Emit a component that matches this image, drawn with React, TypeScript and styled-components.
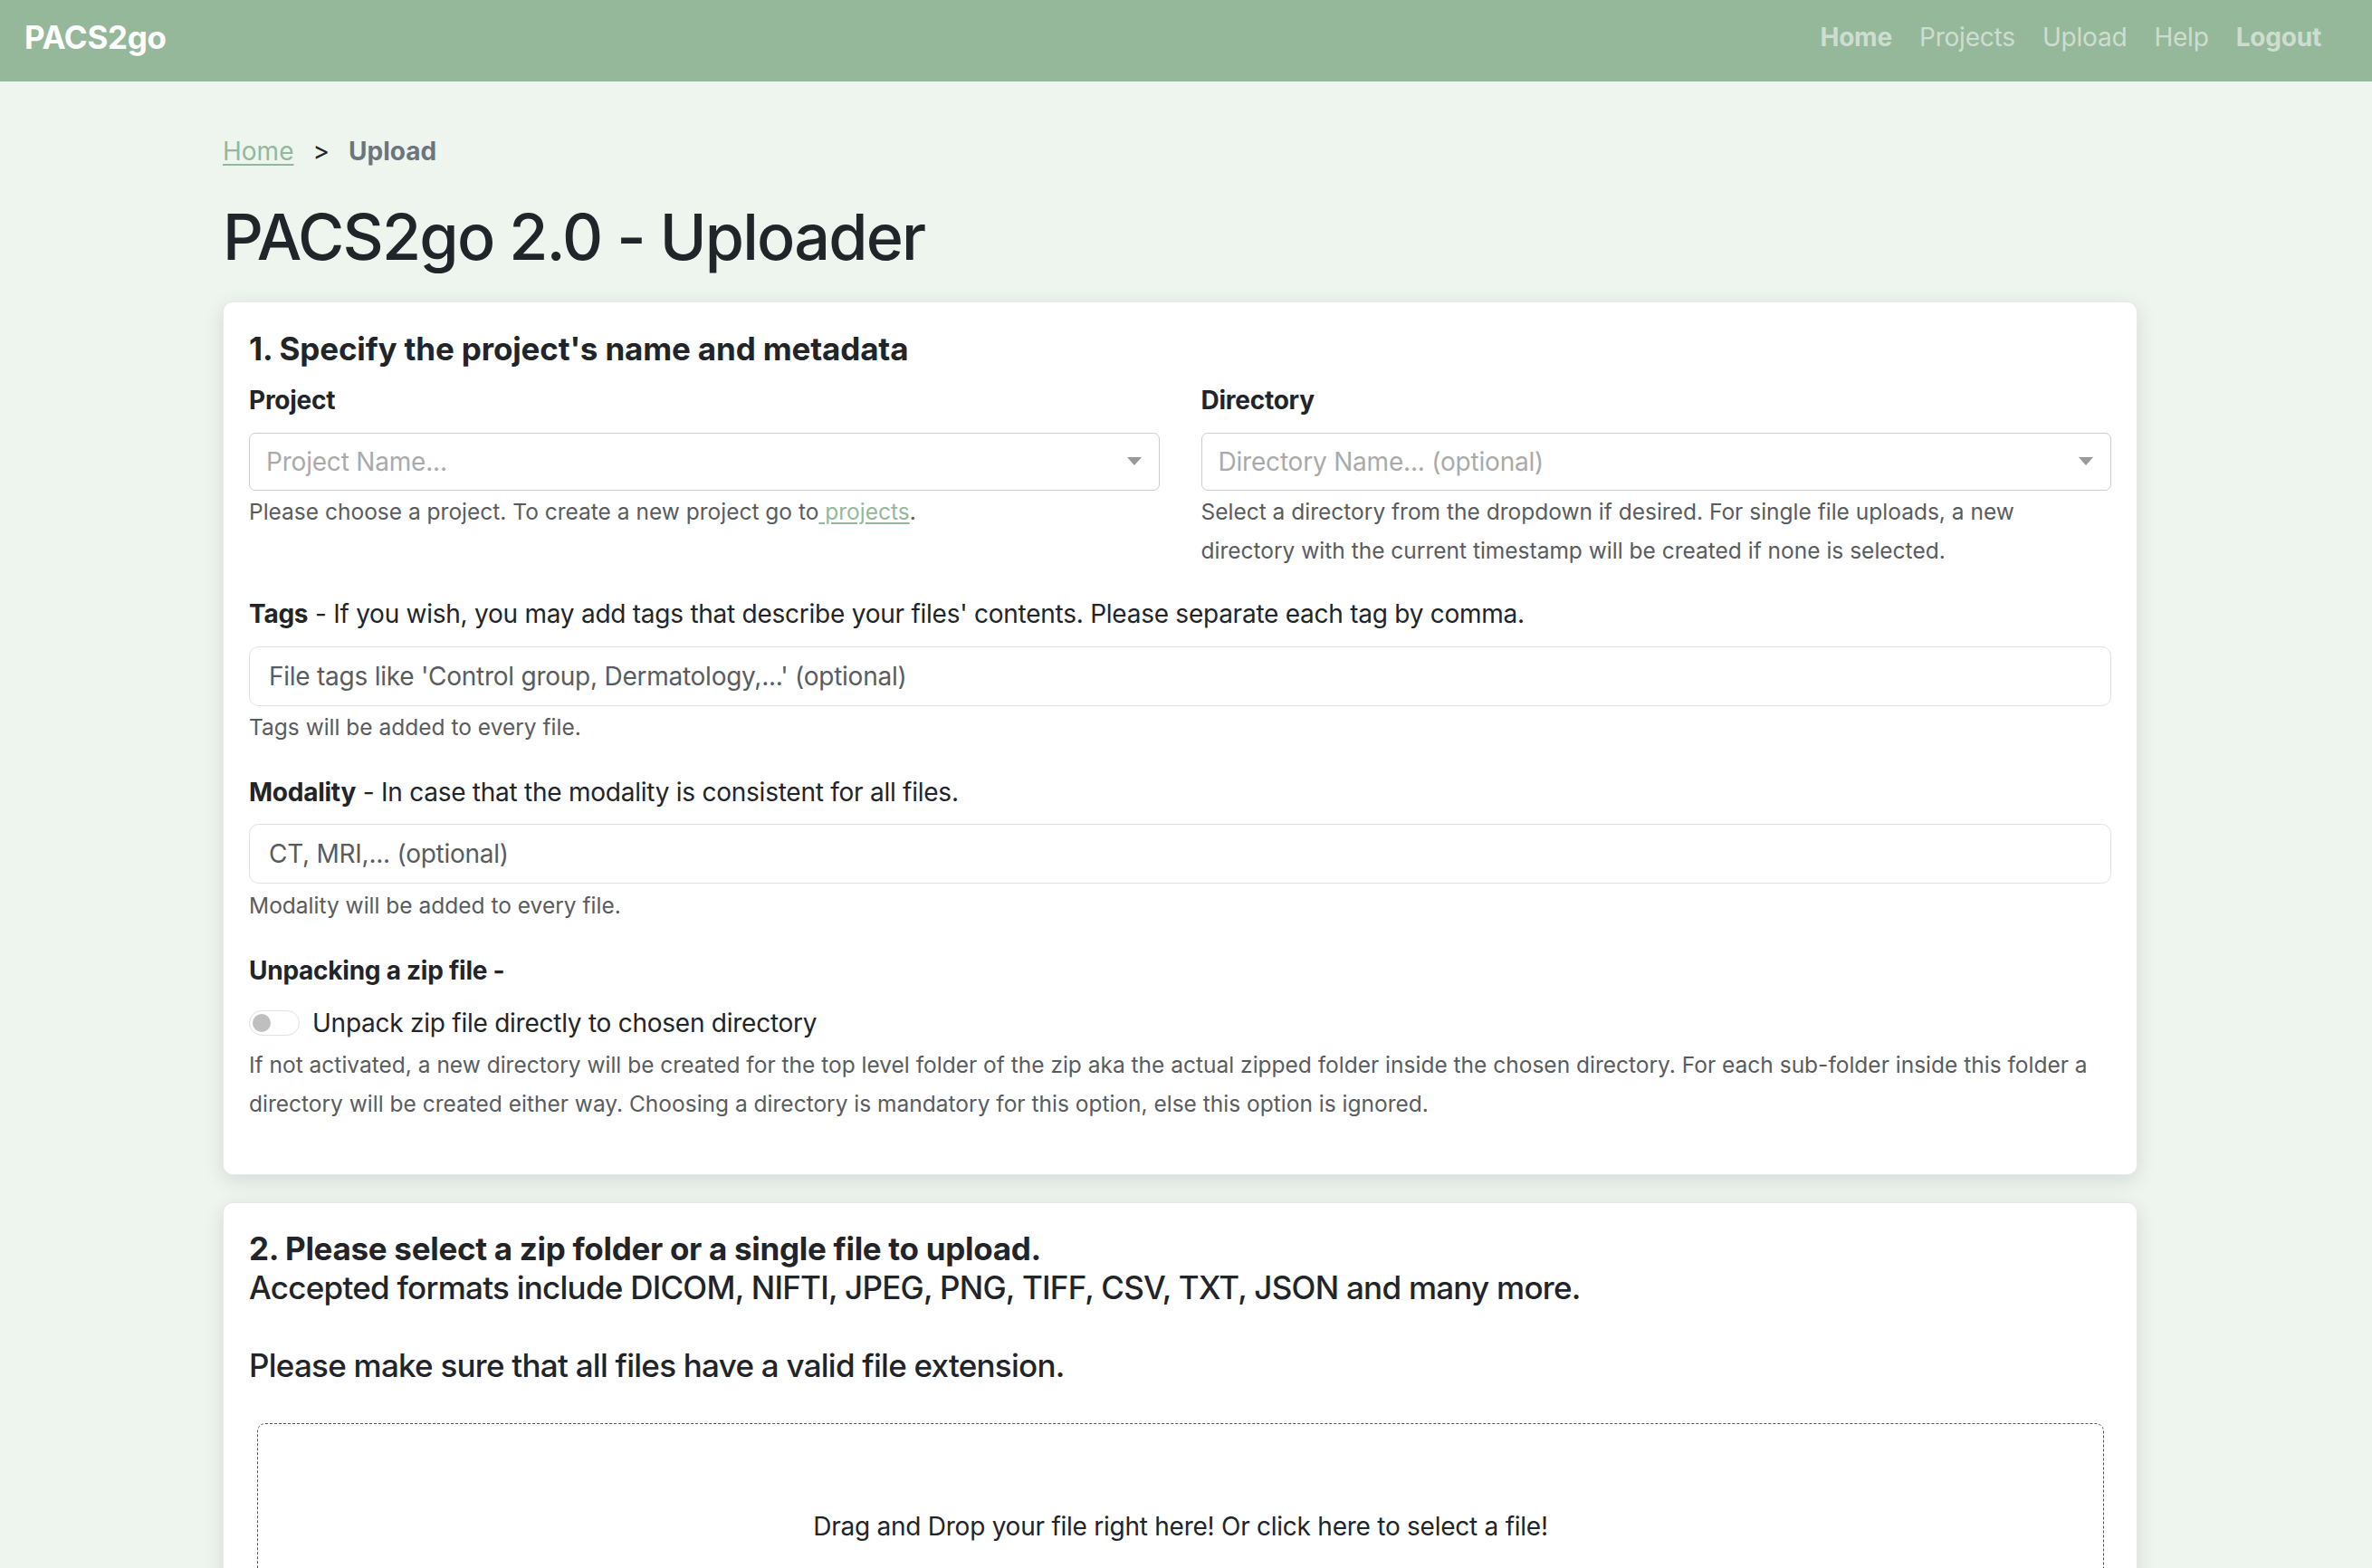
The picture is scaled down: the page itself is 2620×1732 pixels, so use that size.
import React from "react";
import styled, { createGlobalStyle } from "styled-components";

const GlobalStyle = createGlobalStyle`
  html, body {
    margin: 0;
    padding: 0;
  }
  body {
    background: #eef5ef;
    font-family: Inter, "Noto Sans", "Liberation Sans", sans-serif;
    color: #212529;
    font-size: 28px;
    line-height: 1.5;
  }
  * { box-sizing: border-box; }
`;

const NavBar = styled.nav`
  height: 90px;
  background: #95b89b;
  display: flex;
  align-items: center;
  justify-content: space-between;
  padding: 0 41px 8px 27px;
`;

const Brand = styled.a`
  color: #ffffff;
  font-size: 35px;
  font-weight: 700;
  text-decoration: none;
  letter-spacing: -0.3px;
`;

const NavList = styled.div`
  display: flex;
  align-items: center;
`;

const NavLink = styled.a<{ $bold?: boolean }>`
  color: rgba(255, 255, 255, 0.55);
  font-size: 28px;
  font-weight: ${(p) => (p.$bold ? 700 : 400)};
  padding: 0 15px;
  text-decoration: none;
  letter-spacing: -0.2px;
`;

const Main = styled.main`
  width: 2115px;
  margin-left: 246px;
  padding-top: 56px;
  padding-bottom: 40px;
`;

const Breadcrumb = styled.div`
  display: flex;
  align-items: baseline;
  font-size: 28px;
  line-height: 42px;
`;

const CrumbLink = styled.a`
  color: #94b89b;
  text-decoration: underline;
  text-underline-offset: 4px;
  text-decoration-thickness: 2px;
`;

const CrumbSep = styled.span`
  color: #212529;
  margin: 0 21px;
`;

const CrumbActive = styled.span`
  color: #6c757d;
  font-weight: 700;
`;

const Title = styled.h1`
  font-size: 70px;
  font-weight: 500;
  line-height: 84px;
  margin: 32px 0 29px 0;
  letter-spacing: -1.8px;
`;

const Card = styled.section<{ $gap?: number }>`
  background: #ffffff;
  border: 1px solid rgba(0, 0, 0, 0.09);
  border-radius: 11px;
  box-shadow: 0 6px 22px rgba(0, 0, 0, 0.11);
  padding: 29.5px 28px 28px 28px;
  margin-bottom: ${(p) => p.$gap ?? 0}px;
  overflow: hidden;
`;

const CardTitle = styled.h5`
  font-size: 35px;
  font-weight: 700;
  line-height: 42px;
  margin: 0 0 15.5px 0;
  letter-spacing: -0.15px;
`;

const Row = styled.div`
  display: grid;
  grid-template-columns: 1fr 1fr;
  column-gap: 46px;
  margin-bottom: 27.5px;
`;

const Group = styled.div<{ $mb?: number }>`
  margin-bottom: ${(p) => p.$mb ?? 0}px;
`;

const Label = styled.div<{ $mb?: number }>`
  font-size: 28px;
  line-height: 42px;
  letter-spacing: -0.25px;
  margin-bottom: ${(p) => p.$mb ?? 14}px;
`;

const Strong = styled.span`
  font-weight: 700;
`;

const DropdownBox = styled.div`
  height: 64px;
  border: 1px solid #cccccc;
  border-radius: 7px;
  background: #ffffff;
  display: flex;
  align-items: center;
  padding: 0 19px 0 18px;
`;

const DropdownPlaceholder = styled.span`
  flex: 1;
  color: #aaaaaa;
  font-size: 28px;
  letter-spacing: -0.2px;
`;

const Caret = styled.span`
  width: 0;
  height: 0;
  border-style: solid;
  border-width: 9px 8.5px 0 8.5px;
  border-color: #999999 transparent transparent transparent;
`;

const HelpText = styled.div<{ $mt?: number }>`
  font-size: 24.5px;
  line-height: 43px;
  color: #595c5f;
  margin-top: ${(p) => p.$mt ?? 2}px;
`;

const HelpLink = styled.a`
  color: #94b89b;
  text-decoration: underline;
  text-underline-offset: 3px;
`;

const TextInput = styled.input`
  display: block;
  width: 100%;
  height: 66px;
  border: 1px solid #dee2e6;
  border-radius: 10.5px;
  padding: 0 21px;
  font-family: inherit;
  font-size: 28px;
  letter-spacing: -0.25px;
  color: #212529;
  background: #ffffff;
  outline: none;
  &::placeholder {
    color: #595c5f;
    opacity: 1;
  }
`;

const SwitchRow = styled.label`
  display: flex;
  align-items: center;
  gap: 14px;
  font-size: 28px;
  line-height: 42px;
  letter-spacing: -0.25px;
  margin-top: 15.5px;
`;

const SwitchTrack = styled.span`
  width: 56px;
  height: 28px;
  border: 1px solid #dee2e6;
  border-radius: 14px;
  background: #ffffff;
  display: flex;
  align-items: center;
  padding-left: 3px;
  flex-shrink: 0;
`;

const SwitchKnob = styled.span`
  width: 20px;
  height: 20px;
  border-radius: 50%;
  background: #bfbfbf;
`;

const Heading2 = styled.h5`
  font-size: 35px;
  font-weight: 500;
  line-height: 43px;
  margin: 0 0 14px 0;
  letter-spacing: -0.75px;
`;

const Bold = styled.span`
  font-weight: 700;
  letter-spacing: -0.3px;
`;

const DropZone = styled.div`
  margin: 42px 8px 0 9px;
  height: 226px;
  border: 1px dashed #555555;
  border-radius: 9px;
  display: flex;
  align-items: center;
  justify-content: center;
  font-size: 28px;
  letter-spacing: -0.25px;
  color: #212529;
  padding-top: 2px;
`;

export default function App() {
  return (
    <>
      <GlobalStyle />
      <NavBar>
        <Brand href="#">PACS2go</Brand>
        <NavList>
          <NavLink $bold href="#">Home</NavLink>
          <NavLink href="#">Projects</NavLink>
          <NavLink href="#">Upload</NavLink>
          <NavLink href="#">Help</NavLink>
          <NavLink $bold href="#">Logout</NavLink>
        </NavList>
      </NavBar>
      <Main>
        <Breadcrumb>
          <CrumbLink href="#">Home</CrumbLink>
          <CrumbSep>&gt;</CrumbSep>
          <CrumbActive>Upload</CrumbActive>
        </Breadcrumb>
        <Title>PACS2go 2.0 - Uploader</Title>

        <Card $gap={30}>
          <CardTitle>1. Specify the project's name and metadata</CardTitle>
          <Row>
            <div>
              <Label $mb={14.5}>
                <Strong>Project</Strong>
              </Label>
              <DropdownBox>
                <DropdownPlaceholder>Project Name...</DropdownPlaceholder>
                <Caret />
              </DropdownBox>
              <HelpText>
                Please choose a project. To create a new project go to
                <HelpLink href="#"> projects</HelpLink>.
              </HelpText>
            </div>
            <div>
              <Label $mb={14.5}>
                <Strong>Directory</Strong>
              </Label>
              <DropdownBox>
                <DropdownPlaceholder>Directory Name... (optional)</DropdownPlaceholder>
                <Caret />
              </DropdownBox>
              <HelpText>
                Select a directory from the dropdown if desired. For single file uploads, a new
                directory with the current timestamp will be created if none is selected.
              </HelpText>
            </div>
          </Row>

          <Group $mb={29}>
            <Label $mb={15}>
              <Strong>Tags</Strong> - If you wish, you may add tags that describe your files'
              contents. Please separate each tag by comma.
            </Label>
            <TextInput placeholder="File tags like 'Control group, Dermatology,...' (optional)" />
            <HelpText>Tags will be added to every file.</HelpText>
          </Group>

          <Group $mb={29}>
            <Label $mb={14}>
              <Strong>Modality</Strong> - In case that the modality is consistent for all files.
            </Label>
            <TextInput placeholder="CT, MRI,... (optional)" />
            <HelpText $mt={3}>Modality will be added to every file.</HelpText>
          </Group>

          <Group $mb={28}>
            <Label $mb={0}>
              <Strong>Unpacking a zip file -</Strong>
            </Label>
            <SwitchRow>
              <SwitchTrack>
                <SwitchKnob />
              </SwitchTrack>
              Unpack zip file directly to chosen directory
            </SwitchRow>
            <HelpText $mt={4}>
              If not activated, a new directory will be created for the top level folder of the
              zip aka the actual zipped folder inside the chosen directory. For each sub-folder
              inside this folder a directory will be created either way. Choosing a directory is
              mandatory for this option, else this option is ignored.
            </HelpText>
          </Group>
        </Card>

        <Card>
          <Heading2>
            <Bold>2. Please select a zip folder or a single file to upload.</Bold>
            <br />
            Accepted formats include DICOM, NIFTI, JPEG, PNG, TIFF, CSV, TXT, JSON and many more.
            <br />
            <br />
            Please make sure that all files have a valid file extension.
          </Heading2>
          <DropZone>Drag and Drop your file right here! Or click here to select a file!</DropZone>
        </Card>
      </Main>
    </>
  );
}
